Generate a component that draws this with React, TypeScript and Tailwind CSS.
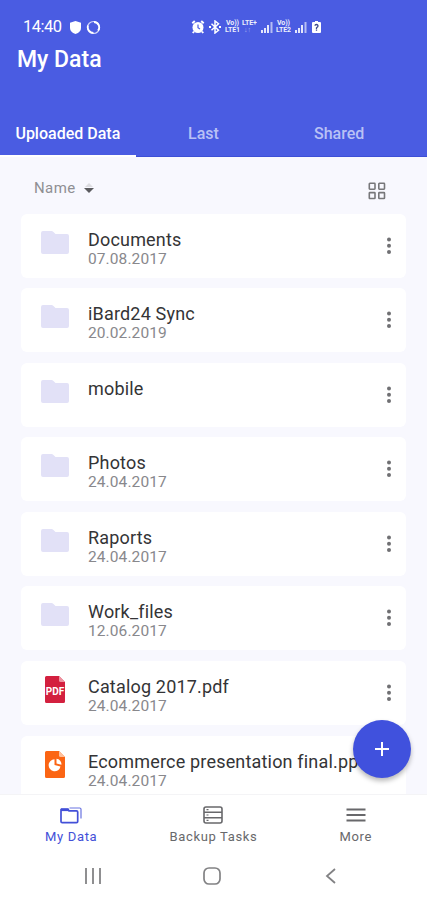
import clsx from 'clsx'
import type { ReactNode } from 'react'

type FileKind = 'folder' | 'pdf' | 'slides'

interface FileItem {
  name: string
  date?: string
  kind: FileKind
}

const files: FileItem[] = [
  { name: 'Documents', date: '07.08.2017', kind: 'folder' },
  { name: 'iBard24 Sync', date: '20.02.2019', kind: 'folder' },
  { name: 'mobile', kind: 'folder' },
  { name: 'Photos', date: '24.04.2017', kind: 'folder' },
  { name: 'Raports', date: '24.04.2017', kind: 'folder' },
  { name: 'Work_files', date: '12.06.2017', kind: 'folder' },
  { name: 'Catalog 2017.pdf', date: '24.04.2017', kind: 'pdf' },
  { name: 'Ecommerce presentation final.pp', date: '24.04.2017', kind: 'slides' },
]

const tabs = ['Uploaded Data', 'Last', 'Shared']

function FileIcon({ kind }: { kind: FileKind }) {
  if (kind === 'folder') {
    return (
      <svg width="28" height="23" viewBox="0 0 28 23" fill="#e2e1f7">
        <path d="M2 0h8.500q1 0 1.700.7L14.500 3H26a2 2 0 0 1 2 2v16a2 2 0 0 1-2 2H2a2 2 0 0 1-2-2V2a2 2 0 0 1 2-2z" />
      </svg>
    )
  }
  const pdf = kind === 'pdf'
  return (
    <svg width="20" height="27" viewBox="0 0 20 27">
      <path
        d="M1.500 0H14l6 6v19.500a1.500 1.500 0 0 1-1.500 1.500h-17A1.500 1.500 0 0 1 0 25.500v-24A1.500 1.500 0 0 1 1.500 0z"
        fill={pdf ? '#d3203f' : '#fb6514'}
      />
      <path d="M14 0l6 6h-4.500A1.500 1.500 0 0 1 14 4.500z" fill={pdf ? '#ee93a0' : '#ffc09a'} />
      {pdf ? (
        <text x="10" y="18.800" textAnchor="middle" fontFamily="Roboto, sans-serif" fontSize="10" fontWeight="700" fill="#fff">
          PDF
        </text>
      ) : (
        <g fill="#fff">
          <path d="M9.500 8.200a6 6 0 1 0 6 7.300L9.500 14z" />
          <path d="M11.500 7.800v4.800l4.900 1.200a5.500 5.500 0 0 0-4.900-6z" />
        </g>
      )}
    </svg>
  )
}

function FileRow({ name, date, kind }: FileItem) {
  return (
    <div className="flex h-[64px] shrink-0 rounded-md bg-white">
      <div className={clsx('flex w-[67px] shrink-0 justify-center', kind === 'folder' ? 'pt-[17px]' : 'pt-[15px]')}>
        <FileIcon kind={kind} />
      </div>
      <div className="min-w-0 flex-1 pt-[15px] whitespace-nowrap">
        <div className="text-[18px] leading-[21px] tracking-[0.18px] text-[#343436]">{name}</div>
        {date && <div className="text-[15.500px] leading-[18px] tracking-[0.1px] text-[#88888c]">{date}</div>}
      </div>
      <div className="flex w-[34px] shrink-0 justify-center pt-[23px]">
        <svg width="6" height="18" viewBox="0 0 6 18" fill="#707073">
          <circle cx="3" cy="2.500" r="2" />
          <circle cx="3" cy="8.800" r="2" />
          <circle cx="3" cy="15.100" r="2" />
        </svg>
      </div>
    </div>
  )
}

function Signal() {
  return (
    <svg width="12" height="11" viewBox="0 0 12 11" fill="#fff">
      <path d="M0 8h2v3H0zM3 6h2v5H3zM6 3h2v8H6z" opacity=".85" />
      <path d="M9.500 0h2v11h-2z" opacity=".6" />
    </svg>
  )
}

function StatusBar() {
  return (
    <div className="flex h-[39px] items-end text-white">
      <div className="ml-[23px] flex w-[168px] items-center">
        <span className="text-[16.500px] leading-6 tracking-[-0.5px]">14:40</span>
        <svg className="ml-[8px]" width="11" height="13" viewBox="0 0 11 13" fill="#fff">
          <path d="M5.500 0L11 1.800V7q0 4-5.500 6Q0 11 0 7V1.800z" />
        </svg>
        <svg className="ml-[5px]" width="15" height="15" viewBox="0 0 15 15" fill="none" stroke="#fff">
          <circle cx="7.500" cy="7.500" r="6" strokeWidth="1.200" opacity=".75" />
          <path d="M8 2a5.300 5.300 0 0 1 4 8.600M2 5.500A5.800 5.800 0 0 0 7.500 13" strokeWidth="1.800" />
        </svg>
      </div>
      <div className="flex h-6 items-center">
        <svg width="14" height="14" viewBox="0 0 14 14">
          <path d="M3.800 1L1.300 3.200M10.200 1l2.500 2.200M3 11.500L1.800 13M11 11.500l1.200 1.500" stroke="#fff" strokeWidth="2" />
          <circle cx="7" cy="7.500" r="5.500" fill="#fff" />
          <path d="M7 4.500v3.200l2 1.300" fill="none" stroke="#4a5ce2" strokeWidth="1.200" />
        </svg>
        <svg className="ml-[4px]" width="12" height="14" viewBox="0 0 12 14" fill="none" stroke="#fff" strokeWidth="1.500">
          <path d="M2.500 3.800l7 6.500L6 13V1l3.500 2.700-7 6.500" />
          <path d="M0 7h2M10 7h2" strokeWidth="2" />
        </svg>
        <div className="ml-[4px] w-[17px] text-[7px] leading-[7px] font-bold tracking-[-0.1px] opacity-90">
          <div className="pl-px">Vo))</div>
          <div>LTE1</div>
        </div>
        <div className="w-[17px] text-[7px] leading-[7px] font-bold tracking-[-0.1px] opacity-90">
          <div>LTE+</div>
          <div className="pl-[2px] opacity-50">↓↑</div>
        </div>
        <div className="ml-[2px] flex">
          <Signal />
        </div>
        <div className="ml-[3px] w-[17px] text-[7px] leading-[7px] font-bold tracking-[-0.1px] opacity-90">
          <div className="pl-px">Vo))</div>
          <div>LTE2</div>
        </div>
        <div className="ml-[2px] flex">
          <Signal />
        </div>
        <svg className="ml-[5px]" width="9" height="12" viewBox="0 0 9 12">
          <path d="M3 0h3v1h2a1 1 0 0 1 1 1v9a1 1 0 0 1-1 1H1a1 1 0 0 1-1-1V2a1 1 0 0 1 1-1h2z" fill="#fff" />
          <path d="M3 4.800q0-1.300 1.500-1.300T6 5Q6 6 4.500 6.800V8M4.500 8.600v1.200" fill="none" stroke="#3c4a8c" strokeWidth="1.300" />
        </svg>
      </div>
    </div>
  )
}

function NavItem({ label, active, children }: { label: string; active?: boolean; children: ReactNode }) {
  return (
    <div className={clsx('flex flex-1 flex-col items-center', active ? 'text-[#4350d8]' : 'text-[#68686b]')}>
      <div className="flex h-[20px] items-center">{children}</div>
      <span className="mt-[4px] text-[13px] leading-[16px] tracking-[0.65px]">{label}</span>
    </div>
  )
}

export default function App() {
  return (
    <div className="flex h-[900px] w-[427px] flex-col overflow-hidden bg-white font-[Roboto,sans-serif]">
      <header className="flex h-[157px] shrink-0 flex-col bg-[#4a5ce2]">
        <StatusBar />
        <h1 className="mt-[6px] ml-[17px] text-[23px] leading-[30px] font-medium text-white">My Data</h1>
        <div className="mt-auto flex h-[48px] border-b border-[#3d4fd6] pr-[20px]">
          {tabs.map((tab, i) => (
            <div
              key={tab}
              className={clsx(
                '-mb-px flex flex-1 justify-center border-b-2 pt-[15px] text-[16px] leading-[20px] font-medium',
                i === 0 ? 'border-white text-white' : 'border-transparent text-[#b9c1f5]',
              )}
            >
              {tab}
            </div>
          ))}
        </div>
      </header>

      <main className="relative flex min-h-0 flex-1 flex-col bg-[#f8f8fe] px-[21px]">
        <div className="flex h-[56.500px] shrink-0 items-start justify-between pr-[20px] pl-[13px]">
          <div className="flex items-center pt-[21px] text-[15px] leading-[20px] tracking-[0.4px] text-[#8f8f93]">
            Name
            <svg className="ml-[8px]" width="10" height="12" viewBox="0 0 10 12">
              <path d="M5 1l4 4H1z" fill="#dcdce0" />
              <path d="M0 6h10l-5 5z" fill="#5b5b5f" />
            </svg>
          </div>
          <svg className="mt-[25px]" width="18" height="18" viewBox="0 0 18 18" fill="none" stroke="#77777a" strokeWidth="1.600">
            <rect x="1.300" y="1.300" width="5.700" height="5.900" rx=".6" />
            <rect x="10.800" y="1.300" width="5.700" height="5.900" rx=".6" />
            <rect x="1.300" y="10.600" width="5.700" height="5.900" rx=".6" />
            <rect x="10.800" y="10.600" width="5.700" height="5.900" rx=".6" />
          </svg>
        </div>
        <div className="flex min-h-0 flex-1 flex-col gap-[10.600px] overflow-hidden">
          {files.map((file) => (
            <FileRow key={file.name} {...file} />
          ))}
        </div>
        <button className="absolute right-[16px] bottom-[16px] flex size-[58px] items-center justify-center rounded-full bg-[#4051dd] shadow-[0_3px_5px_rgba(0,0,0,0.28)]">
          <svg width="16" height="16" viewBox="0 0 16 16" stroke="#fff" strokeWidth="2">
            <path d="M8 1v14M1 8h14" />
          </svg>
        </button>
      </main>

      <nav className="flex h-[57px] shrink-0 border-t border-[#f4f4f6] pt-[10px]">
        <NavItem label="My Data" active>
          <svg width="22" height="17" viewBox="0 0 22 17" fill="none" stroke="currentColor" strokeWidth="1.700">
            <path d="M1 2.500V14.500a1.200 1.200 0 0 0 1.200 1.200H16.500a1.200 1.200 0 0 0 1.200-1.200V5a1.200 1.200 0 0 0-1.200-1.200H9L7.800 2H1.500z" />
            <path d="M9.500 1h10.200A1.300 1.300 0 0 1 21 2.300v9.200" strokeWidth="1.200" opacity=".8" />
            <path d="M1 2.900h8" strokeWidth="2.400" />
          </svg>
        </NavItem>
        <NavItem label="Backup Tasks">
          <svg width="20" height="18" viewBox="0 0 20 18" fill="none" stroke="currentColor" strokeWidth="1.600">
            <rect x="1" y="1" width="18" height="16" rx="2" />
            <path d="M1 6.300h18M1 11.700h18" />
            <path d="M3.500 3.700h2M3.500 9h2M3.500 14.300h2" strokeWidth="1.200" />
          </svg>
        </NavItem>
        <NavItem label="More">
          <svg width="20" height="14" viewBox="0 0 20 14" stroke="currentColor" strokeWidth="2">
            <path d="M.5 1.500h19M.5 7h19M.5 12.500h19" />
          </svg>
        </NavItem>
      </nav>

      {/* Android navigation buttons */}
      <div className="flex h-[49px] shrink-0 items-center justify-between pr-[87px] pl-[84px]">
        <svg width="18" height="16" viewBox="0 0 18 16" stroke="#8a8a8c" strokeWidth="1.900">
          <path d="M2 0v16M9 0v16M16 0v16" />
        </svg>
        <svg width="18" height="18" viewBox="0 0 18 18" fill="none" stroke="#828284" strokeWidth="1.700">
          <rect x="1" y="1" width="16" height="16" rx="5" />
        </svg>
        <svg width="18" height="16" viewBox="0 0 18 16" fill="none" stroke="#828284" strokeWidth="1.800">
          <path d="M13 1L5 8l8 7" />
        </svg>
      </div>
    </div>
  )
}
